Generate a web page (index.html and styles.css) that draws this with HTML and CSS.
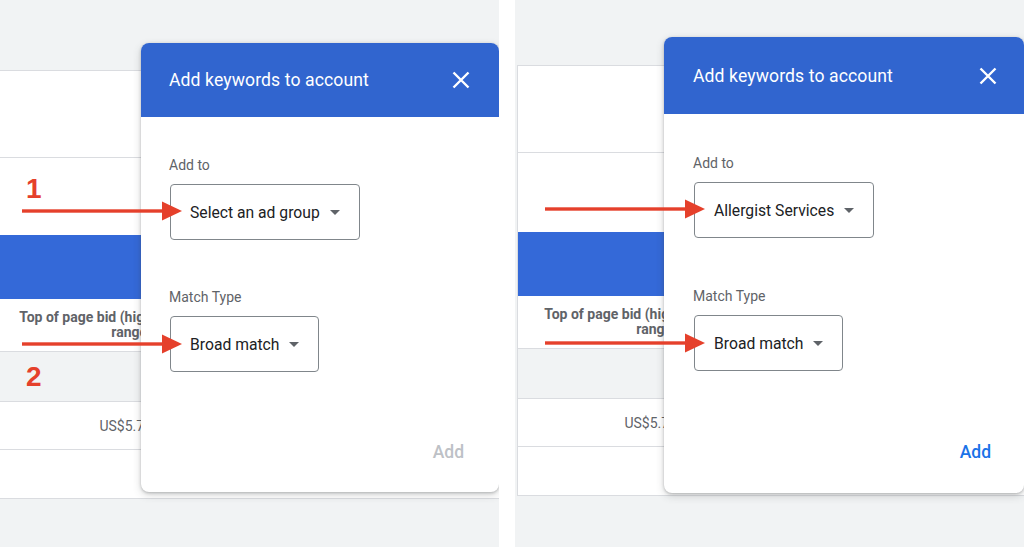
FILE: index.html
```html
<!DOCTYPE html>
<html lang="en">
<head>
  <meta charset="UTF-8">
  <meta name="viewport" content="width=device-width, initial-scale=1.0">
  <title>Add keywords to account</title>
  <link rel="stylesheet" href="styles.css">
</head>
<body>
  <div class="shot">
    <section class="panel panel-left">
      <div class="sheet">
        <div class="row row-top"></div>
        <div class="row row-blank"></div>
        <div class="row band"></div>
        <div class="row row-head"><div class="col">Top of page bid (high<br>range)</div></div>
        <div class="row row-shade"></div>
        <div class="row row-value"><div class="col">US$5.75</div></div>
        <div class="row row-last"></div>
      </div>

      <div class="dialog">
        <div class="dialog-head">
          <span class="dialog-title">Add keywords to account</span>
          <svg class="close" width="18" height="18" viewBox="0 0 18 18"><path d="M1.5 1.5L16.5 16.5M16.5 1.5L1.5 16.5" stroke="#fff" stroke-width="2.4" fill="none"/></svg>
        </div>
        <div class="dialog-body">
          <div class="field">
            <div class="label">Add to</div>
            <div class="select"><span>Select an ad group</span><i class="caret"></i></div>
          </div>
          <div class="field">
            <div class="label">Match Type</div>
            <div class="select"><span>Broad match</span><i class="caret"></i></div>
          </div>
          <div class="actions"><span class="btn-add">Add</span></div>
        </div>
      </div>

      <svg class="arrow arrow-1" width="160" height="20" viewBox="0 0 160 20"><rect x="0" y="8.3" width="142" height="3.4" fill="#e5402b"/><polygon points="140,0.5 160,10 140,19.5" fill="#e5402b"/></svg>
      <svg class="arrow arrow-2" width="160" height="20" viewBox="0 0 160 20"><rect x="0" y="8.3" width="142" height="3.4" fill="#e5402b"/><polygon points="140,0.5 160,10 140,19.5" fill="#e5402b"/></svg>
      <span class="step step-1">1</span>
      <span class="step step-2">2</span>
    </section>

    <section class="panel panel-right">
      <div class="sheet">
        <div class="row row-top"></div>
        <div class="row row-blank"></div>
        <div class="row band"></div>
        <div class="row row-head"><div class="col">Top of page bid (high<br>range)</div></div>
        <div class="row row-shade"></div>
        <div class="row row-value"><div class="col">US$5.75</div></div>
        <div class="row row-last"></div>
      </div>

      <div class="dialog">
        <div class="dialog-head">
          <span class="dialog-title">Add keywords to account</span>
          <svg class="close" width="18" height="18" viewBox="0 0 18 18"><path d="M1.5 1.5L16.5 16.5M16.5 1.5L1.5 16.5" stroke="#fff" stroke-width="2.4" fill="none"/></svg>
        </div>
        <div class="dialog-body">
          <div class="field">
            <div class="label">Add to</div>
            <div class="select"><span>Allergist Services</span><i class="caret"></i></div>
          </div>
          <div class="field">
            <div class="label">Match Type</div>
            <div class="select"><span>Broad match</span><i class="caret"></i></div>
          </div>
          <div class="actions"><span class="btn-add active">Add</span></div>
        </div>
      </div>

      <svg class="arrow arrow-1" width="160" height="20" viewBox="0 0 160 20"><rect x="0" y="8.3" width="142" height="3.4" fill="#e5402b"/><polygon points="140,0.5 160,10 140,19.5" fill="#e5402b"/></svg>
      <svg class="arrow arrow-2" width="160" height="20" viewBox="0 0 160 20"><rect x="0" y="8.3" width="142" height="3.4" fill="#e5402b"/><polygon points="140,0.5 160,10 140,19.5" fill="#e5402b"/></svg>
    </section>
  </div>
</body>
</html>
```

FILE: styles.css
```css
html, body {
  margin: 0;
  padding: 0;
  background: #fff;
  font-family: Roboto, "Liberation Sans", Arial, sans-serif;
}
.shot {
  display: flex;
  gap: 16px;
  width: 1024px;
  height: 547px;
  overflow: hidden;
}
.panel {
  position: relative;
  height: 547px;
  background: #f1f3f4;
  overflow: hidden;
}
.panel-left {
  width: 499px;
}
.panel-right {
  width: 509px;
}

/* table behind the dialog */
.sheet {
  background: #fff;
  border-top: 1px solid #dadce0;
}
.panel-left .sheet {
  margin-top: 70px;
}
.panel-right .sheet {
  margin-top: 65px;
  margin-left: 2px;
  border-left: 1px solid #dadce0;
}
.row {
  display: flex;
  align-items: center;
  box-sizing: border-box;
  border-bottom: 1px solid #dadce0;
}
.row-top { height: 87px; }
.row-blank { height: 77px; border-bottom: none; }
.panel-right .row-blank { height: 79px; }
.band {
  height: 64px;
  background: #3469d8;
  border-bottom: none;
}
.row-head {
  height: 53px;
  font-size: 14px;
  font-weight: 700;
  line-height: 15px;
  color: #5f6368;
}
.row-shade {
  height: 50px;
  background: #f1f3f4;
}
.row-value {
  height: 48px;
  font-size: 14px;
  color: #5f6368;
}
.row-last { height: 49px; }
.col {
  width: 152px;
  text-align: right;
  white-space: nowrap;
}
.panel-right .col {
  width: 159px;
}

/* dialog */
.dialog {
  position: absolute;
  left: 141px;
  top: 43px;
  width: 358px;
  height: 449px;
  display: flex;
  flex-direction: column;
  background: #fff;
  border-radius: 8px;
  overflow: hidden;
  box-shadow: 0 1px 3px rgba(60, 64, 67, 0.3), 0 3px 8px rgba(60, 64, 67, 0.2);
}
.panel-right .dialog {
  left: 149px;
  top: 37px;
  width: 360px;
  height: 456px;
}
.dialog-head {
  height: 74px;
  flex-shrink: 0;
  display: flex;
  align-items: center;
  justify-content: space-between;
  padding: 0 29px 0 28px;
  background: #3165cf;
  color: #fff;
}
.panel-right .dialog-head {
  height: 77px;
  padding: 0 27px 0 29px;
}
.dialog-title {
  font-size: 17.6px;
  letter-spacing: 0.1px;
}
.dialog-body {
  display: flex;
  flex-direction: column;
  align-items: flex-start;
  padding: 40px 28px 0 28px;
}
.panel-right .dialog-body {
  padding-top: 41px;
  padding-left: 29px;
}
.field + .field {
  margin-top: 49px;
}
.panel-right .field + .field {
  margin-top: 50px;
}
.label {
  font-size: 14px;
  line-height: 16px;
  color: #5f6368;
  margin-bottom: 11px;
}
.select {
  display: inline-flex;
  align-items: center;
  gap: 10px;
  height: 56px;
  box-sizing: border-box;
  padding: 0 19px 0 19px;
  margin-left: 1px;
  border: 1px solid #80868b;
  border-radius: 4px;
  font-size: 15.7px;
  color: #202124;
}
.caret {
  width: 0;
  height: 0;
  border-left: 5px solid transparent;
  border-right: 5px solid transparent;
  border-top: 5px solid #5f6368;
}
.actions {
  align-self: stretch;
  margin-top: 70px;
  text-align: right;
  padding-right: 7px;
}
.panel-right .actions {
  margin-top: 71px;
  padding-right: 5px;
}
.btn-add {
  font-size: 17.5px;
  font-weight: 500;
  line-height: 20px;
  color: #bdc1c6;
}
.btn-add.active {
  color: #1a73e8;
}

/* red annotations */
.arrow {
  position: absolute;
  left: 22px;
}
.panel-left .arrow-1 { top: 201px; }
.panel-left .arrow-2 { top: 334px; }
.panel-right .arrow { left: 30px; }
.panel-right .arrow-1 { top: 199px; }
.panel-right .arrow-2 { top: 333px; }
.step {
  position: absolute;
  font-family: "Liberation Sans", Arial, sans-serif;
  font-weight: 700;
  font-size: 28px;
  line-height: 28px;
  color: #e5402b;
}
.step-1 { left: 26px; top: 175px; }
.step-2 { left: 26px; top: 363px; }
```
